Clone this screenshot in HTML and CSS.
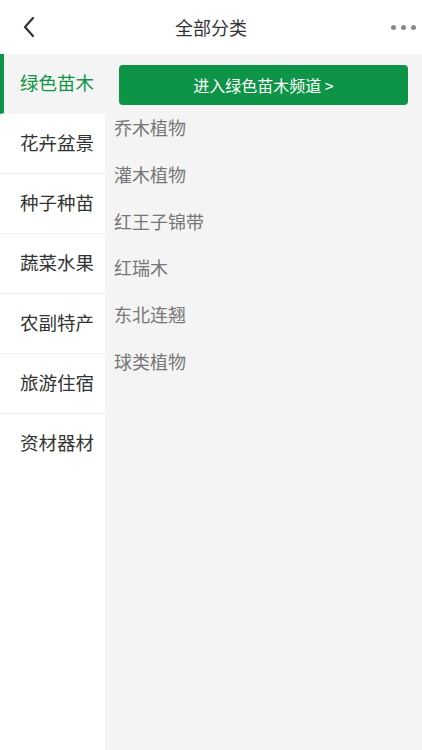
FILE: index.html
```html
<!DOCTYPE html>
<html lang="zh">
<head>
    <meta charset="UTF-8">
    <meta name="viewport" content="width=device-width, initial-scale=1.0">
    <title>全部分类</title>
    <link rel="stylesheet" href="styles.css">
</head>
<body>
    <header class="topbar">
        <span class="back">
            <svg width="14" height="22" viewBox="0 0 14 22"><path d="M11 2 L3 11 L11 20" fill="none" stroke="#333" stroke-width="2.2" stroke-linecap="round" stroke-linejoin="round"/></svg>
        </span>
        <h1 class="title">全部分类</h1>
        <span class="more"><i></i><i></i><i></i></span>
    </header>

    <main class="layout">
        <ul class="sidebar">
            <li class="cat active">绿色苗木</li>
            <li class="cat">花卉盆景</li>
            <li class="cat">种子种苗</li>
            <li class="cat">蔬菜水果</li>
            <li class="cat">农副特产</li>
            <li class="cat">旅游住宿</li>
            <li class="cat">资材器材</li>
        </ul>
        <section class="content">
            <a class="channel">进入绿色苗木频道 &gt;</a>
            <ul class="sublist">
                <li>乔木植物</li>
                <li>灌木植物</li>
                <li>红王子锦带</li>
                <li>红瑞木</li>
                <li>东北连翘</li>
                <li>球类植物</li>
            </ul>
        </section>
    </main>
</body>
</html>
```

FILE: styles.css
```css
body {
    font-family: "Noto Sans CJK SC", "Noto Sans", sans-serif;
    margin: 0;
    padding: 0;
    background-color: #fff;
}

ul {
    list-style: none;
    margin: 0;
    padding: 0;
}

.topbar {
    height: 54px;
    display: flex;
    align-items: center;
    justify-content: space-between;
    padding: 0 6px 0 22px;
    position: relative;
}

.back {
    display: flex;
    width: 14px;
}

.title {
    position: absolute;
    left: 0;
    right: 0;
    text-align: center;
    margin: 0;
    font-size: 18px;
    font-weight: normal;
    color: #333;
    pointer-events: none;
}

.more {
    display: flex;
    gap: 5px;
}

.more i {
    width: 5px;
    height: 5px;
    border-radius: 50%;
    background-color: #8a8a8a;
}

.layout {
    display: flex;
    height: 696px;
}

.sidebar {
    width: 105px;
    background-color: #fff;
}

.cat {
    height: 56px;
    display: flex;
    align-items: center;
    padding: 0 0 3px 20px;
    font-size: 18.5px;
    color: #333;
    border-bottom: 1px solid #f0f0f0;
}

.cat:last-child {
    border-bottom: none;
}

.cat.active {
    background-color: #f4f4f4;
    color: #0e9446;
    border-left: 4px solid #0e9446;
    padding-left: 16px;
    border-bottom-color: #f4f4f4;
}

.content {
    flex: 1;
    background-color: #f4f4f4;
    padding: 11px 14px 0 9px;
}

.channel {
    display: flex;
    align-items: center;
    justify-content: center;
    height: 39px;
    padding-bottom: 1px;
    margin-left: 5px;
    background-color: #0e9446;
    color: #fff;
    font-size: 16px;
    border-radius: 4px;
}

.sublist {
    padding-top: 9px;
}

.sublist li {
    height: 46.8px;
    line-height: 26px;
    font-size: 18px;
    color: #777;
}
```
